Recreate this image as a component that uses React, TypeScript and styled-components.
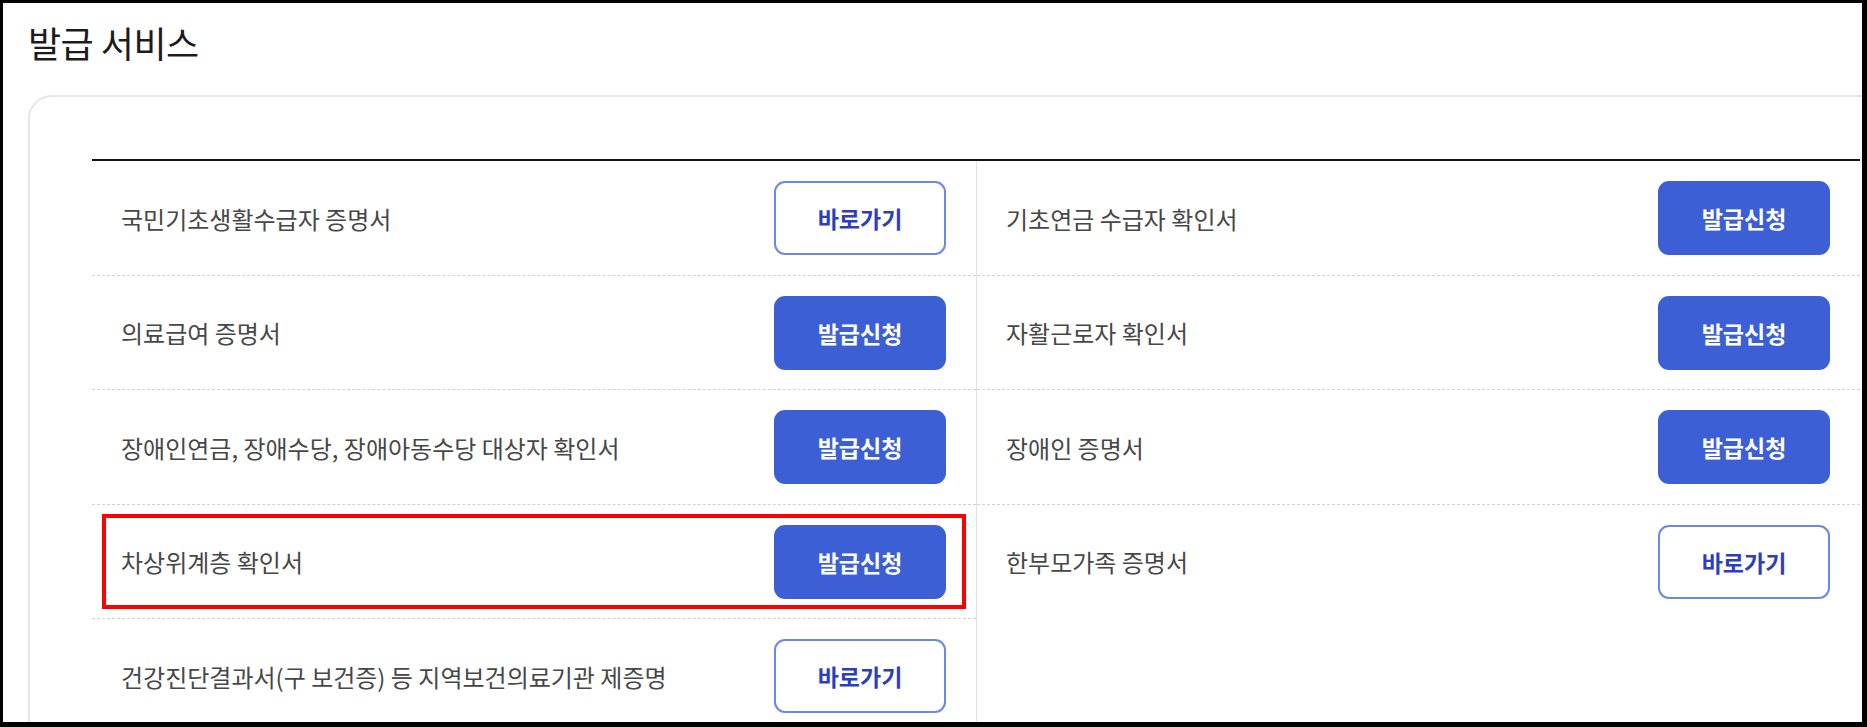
import React from 'react'
import styled, { createGlobalStyle, css } from 'styled-components'

type Kind = 'apply' | 'link'

interface ServiceItem {
  label: string
  kind: Kind
  highlighted?: boolean
}

const LEFT_ITEMS: ServiceItem[] = [
  { label: '국민기초생활수급자 증명서', kind: 'link' },
  { label: '의료급여 증명서', kind: 'apply' },
  { label: '장애인연금, 장애수당, 장애아동수당 대상자 확인서', kind: 'apply' },
  { label: '차상위계층 확인서', kind: 'apply', highlighted: true },
  { label: '건강진단결과서(구 보건증) 등 지역보건의료기관 제증명', kind: 'link' },
]

const RIGHT_ITEMS: ServiceItem[] = [
  { label: '기초연금 수급자 확인서', kind: 'apply' },
  { label: '자활근로자 확인서', kind: 'apply' },
  { label: '장애인 증명서', kind: 'apply' },
  { label: '한부모가족 증명서', kind: 'link' },
]

const GlobalStyle = createGlobalStyle`
  html, body {
    margin: 0;
    padding: 0;
    background: #000;
  }
  body {
    font-family: 'Noto Sans CJK KR', 'Noto Sans', sans-serif;
  }
  * {
    box-sizing: border-box;
  }
`

const Frame = styled.div`
  width: 1867px;
  height: 727px;
  border-style: solid;
  border-color: #000;
  border-width: 3px 5px 5px 3px;
  background: #fff;
  overflow: hidden;
  padding: 16px 0 0 25px;
`

const Title = styled.h2`
  margin: 0;
  font-size: 36px;
  line-height: 46px;
  font-weight: 400;
  color: #1c1c1c;
  letter-spacing: -0.5px;
`

const Card = styled.section`
  margin-top: 30px;
  width: 1960px;
  border: 2px solid #e6e6e6;
  border-radius: 24px;
  padding: 62px;
`

const ListGrid = styled.div`
  width: 1768px;
  display: grid;
  grid-template-columns: 1fr 1fr;
  border-top: 2px solid #111;
`

const Column = styled.ul<{ $divided?: boolean }>`
  margin: 0;
  padding: 0;
  list-style: none;
  display: flex;
  flex-direction: column;
  ${(p) =>
    p.$divided &&
    css`
      border-left: 1px solid #e2e2e2;
    `}
`

const Item = styled.li<{ $highlighted?: boolean }>`
  position: relative;
  display: flex;
  align-items: center;
  justify-content: space-between;
  padding: 20px 30px 19.5px 29px;
  border-bottom: 1px dashed #d2d2d2;
  &:last-child {
    border-bottom: none;
  }
  ${(p) =>
    p.$highlighted &&
    css`
      &::after {
        content: '';
        position: absolute;
        top: 9px;
        bottom: 9px;
        left: 10px;
        right: 10px;
        border: 4px solid #ff0000;
        pointer-events: none;
      }
    `}
`

const Label = styled.span`
  font-size: 24px;
  font-weight: 400;
  color: #474747;
  letter-spacing: 0;
`

const ActionButton = styled.button<{ $kind: Kind }>`
  width: 172px;
  height: 74px;
  border-radius: 11px;
  font-family: inherit;
  font-size: 23px;
  font-weight: 700;
  letter-spacing: 0;
  cursor: pointer;
  ${(p) =>
    p.$kind === 'apply'
      ? css`
          background: #3c5fd6;
          border: 2px solid #3c5fd6;
          color: #fff;
        `
      : css`
          background: #fff;
          border: 2px solid #6b87ea;
          color: #2c3ebd;
        `}
`

const ServiceColumn = ({ items, divided }: { items: ServiceItem[]; divided?: boolean }) => (
  <Column $divided={divided}>
    {items.map((item) => (
      <Item key={item.label} $highlighted={item.highlighted}>
        <Label>{item.label}</Label>
        <ActionButton $kind={item.kind}>{item.kind === 'apply' ? '발급신청' : '바로가기'}</ActionButton>
      </Item>
    ))}
  </Column>
)

const App = () => {
  return (
    <>
      <GlobalStyle />
      <Frame>
        <Title>발급 서비스</Title>
        <Card>
          <ListGrid>
            <ServiceColumn items={LEFT_ITEMS} />
            <ServiceColumn items={RIGHT_ITEMS} divided />
          </ListGrid>
        </Card>
      </Frame>
    </>
  )
}

export default App
